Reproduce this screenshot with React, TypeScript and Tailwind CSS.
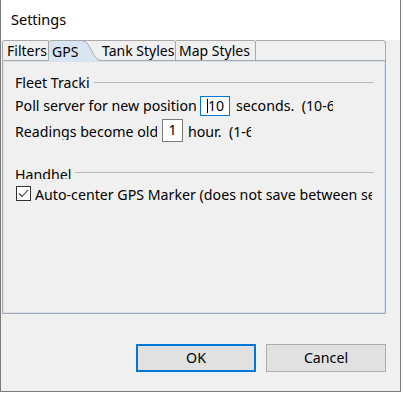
import * as React from "react";

const font = { fontFamily: '"Noto Sans", "Open Sans", sans-serif' };

const Tab = ({
  label,
  className,
}: {
  label: string;
  className?: string;
}) => (
  <div
    className={
      "flex items-center h-full border-t border-b border-r border-[#a9a9a9] rounded-tr-[3px] whitespace-nowrap " +
      (className || "")
    }
  >
    {label}
  </div>
);

// group caption, clipped like the SWT original
const GroupTitle = ({
  label,
  boxClass,
  lineClass,
}: {
  label: string;
  boxClass: string;
  lineClass: string;
}) => (
  <div className="flex items-start">
    <div className={"overflow-hidden whitespace-nowrap leading-[18px] " + boxClass}>
      <div className="-mt-[2px]">{label}</div>
    </div>
    <div className={"flex-1 h-px bg-[#b9b9b9] ml-[4px] " + lineClass} />
  </div>
);

export default function App() {
  return (
    <div className="w-[403px] h-[393px] bg-white text-[14.2px] text-black" style={font}>
      <div className="w-[401px] h-[392px] border-x border-b border-[#7a7a7a] flex flex-col">
        {/* title bar */}
        <div className="h-[40px] bg-white flex items-center pl-[10px] text-[14.5px]">Settings</div>

        <div className="flex-1 bg-[#f0f0f0] flex flex-col">
          {/* tabs */}
          <div className="flex h-[21px] ml-[1px] w-[384px] text-[14px]">
            <Tab label="Filters" className="w-[47px] pl-[4px] border-l rounded-tl-[3px] rounded-tr-none" />
            <div className="flex items-center h-full w-[33px] pl-[3px] bg-[#d9e5f3] border-t border-[#a9a9a9] rounded-tl-[3px]">
              GPS
            </div>
            <svg width="19" height="21" viewBox="0 0 19 21" className="block shrink-0">
              <path d="M0 0.5 C9 0.5 10 20.5 19 20.5 L19 21 L0 21 Z" fill="#d9e5f3" />
              <path d="M0 0.5 L19 0.5" stroke="#a9a9a9" strokeWidth="1" />
              <path d="M0 0.5 C9 0.5 10 20.5 19 20.5" stroke="#a9a9a9" strokeWidth="1" fill="none" />
            </svg>
            <Tab label="Tank Styles" className="w-[75px] pl-[1px]" />
            <Tab label="Map Styles" className="w-[80px] pl-[3px]" />
            <div className="flex-1 h-full border-t border-r border-b border-[#a9a9a9] rounded-tr-[4px]" />
          </div>

          {/* panel */}
          <div className="ml-[1px] w-[384px] h-[253px] border-x border-b border-[#a9a9a9] shadow-[inset_0_0_0_1px_#d5e2f1] flex flex-col pl-[12px] pr-[11px] pt-[15px]">
            <GroupTitle label="Fleet Tracking" boxClass="w-[75px] h-[13px]" lineClass="mt-[6px]" />

            <div className="flex items-start mt-[7px] h-[20px]">
              <div className="w-[181px] h-[18px] overflow-hidden whitespace-nowrap leading-[20px]">
                Poll server for new position
              </div>
              <div className="ml-[4px] w-[30px] h-[20px] border border-[#0078d7] bg-white flex items-center pl-[6px]">
                <span className="w-px h-[14px] bg-black" />
                <span className="leading-[18px]">10</span>
              </div>
              <div className="ml-[6px] w-[97px] h-[18px] overflow-hidden whitespace-nowrap leading-[20px]">
                seconds.&nbsp;&nbsp;(10-60
              </div>
            </div>

            <div className="flex items-start mt-[3px] h-[23px]">
              <div className="w-[142px] h-[21px] overflow-hidden whitespace-nowrap leading-[20px] pt-[3px]">
                Readings become old
              </div>
              <div className="ml-[5px] w-[21px] h-[23px] border border-[#7a7a7a] bg-white flex justify-center leading-[18px] pt-[1px]">
                1
              </div>
              <div className="ml-[5px] w-[63px] h-[21px] overflow-hidden whitespace-nowrap leading-[20px] pt-[3px]">
                hour.&nbsp;&nbsp;(1-6
              </div>
            </div>

            <div className="mt-[26px]">
              <GroupTitle label="Handheld" boxClass="w-[56px] h-[11px]" lineClass="mt-[4px]" />
            </div>

            <div className="flex items-start mt-[7px] h-[16px]">
              <div className="w-[15px] h-[15px] border border-[#333] bg-white flex items-center justify-center ml-px shrink-0">
                <svg width="11" height="9" viewBox="0 0 11 9">
                  <path d="M1 4.5 L4 7.5 L10 1" stroke="#333" strokeWidth="1.1" fill="none" />
                </svg>
              </div>
              <div className="ml-[4px] w-[337px] overflow-hidden whitespace-nowrap leading-[20px] -mt-[1px]">
                Auto-center GPS Marker (does not save between se
              </div>
            </div>
          </div>

          {/* buttons */}
          <div className="flex mt-[30px] pl-[135px] gap-[10px]">
            <button className="w-[120px] h-[28px] bg-[#e1e1e1] border-2 border-[#0078d7] flex items-center justify-center">
              OK
            </button>
            <button className="w-[120px] h-[28px] bg-[#e1e1e1] border border-[#adadad] flex items-center justify-center">
              Cancel
            </button>
          </div>
        </div>
      </div>
    </div>
  );
}
